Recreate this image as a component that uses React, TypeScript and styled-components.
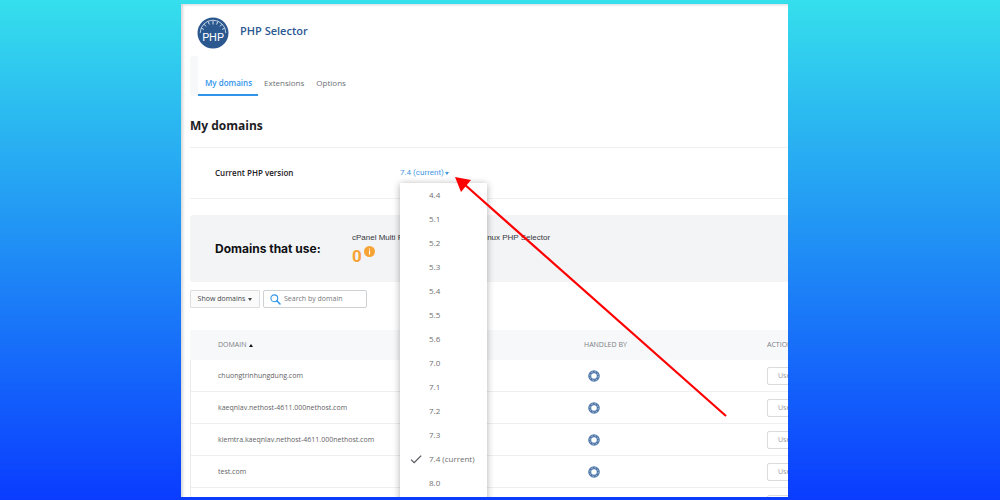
import React from "react";
import styled, { createGlobalStyle, css } from "styled-components";

const GlobalStyle = createGlobalStyle`
  * { box-sizing: border-box; }
  body { margin: 0; font-family: "Open Sans", "Noto Sans", sans-serif; color: #5f6266; }
  button, input { font-family: inherit; }
`;

const Page = styled.div`
  display: grid;
  grid-template-columns: 181fr 607fr 212fr;
  height: 100vh;
  padding: 4px 0 3px;
  background: linear-gradient(180deg, #35dfec 0%, #0a3cff 100%);
`;

const Panel = styled.main`
  grid-column: 2;
  position: relative;
  min-width: 0;
  overflow: hidden;
  padding-left: 9px;
  background: #fff;
  box-shadow: inset 3px 2px 3px -1px #d4d8dc;
`;

const Header = styled.header`
  display: flex;
  align-items: center;
  gap: 11px;
  padding: 13px 0 7px 7px;
`;

const Brand = styled.span`
  font-size: 11px;
  line-height: 16px;
  font-weight: 600;
  color: #2c5890;
  margin-bottom: 4px;
`;

const Tabs = styled.nav`
  display: flex;
  align-items: flex-end;
  height: 40px;
  border-left: 8px solid #f7f8fa;
  border-radius: 3px 0 0 3px;
`;

const Tab = styled.a<{ $active?: boolean }>`
  padding: 0 6px 5px;
  font-size: 8px;
  line-height: 12px;
  text-decoration: none;
  color: #6c6f73;
  border-bottom: 2px solid transparent;
  ${(p) => p.$active && css`
    color: #2f95ea;
    font-weight: 600;
    padding-left: 7px;
    border-color: #2f95ea;
  `}
`;

const Title = styled.h1`
  margin: 21px 0 12px;
  font-size: 12px;
  line-height: 18px;
  font-weight: 700;
  color: #1d2024;
`;

const VersionRow = styled.section`
  display: grid;
  grid-template-columns: 185px 1fr;
  align-items: center;
  height: 52px;
  padding-left: 25px;
  border: solid #eff0f1;
  border-width: 1px 0;
`;

const VersionLabel = styled.span`
  font-size: 8px;
  line-height: 12px;
  font-weight: 600;
  color: #1d2024;
`;

const Picker = styled.div`
  position: relative;
`;

const VersionButton = styled.button`
  display: flex;
  align-items: center;
  gap: 1px;
  padding: 0;
  border: 0;
  background: none;
  font-family: Roboto, sans-serif;
  font-size: 8px;
  line-height: 12px;
  color: #3f97e4;
`;

const Caret = styled.span<{ $up?: boolean }>`
  border: 2px solid transparent;
  ${(p) => p.$up
    ? css`border-top: 0; border-bottom: 3px solid currentColor;`
    : css`border-bottom: 0; border-top: 3px solid currentColor;`}
`;

const Menu = styled.ul`
  position: absolute;
  z-index: 2;
  top: 16px;
  left: 0;
  width: 87px;
  margin: 0;
  padding: 0 0 8px;
  list-style: none;
  background: #fff;
  box-shadow: 0 1px 7px rgba(0, 0, 0, 0.32);
`;

const MenuItem = styled.button`
  display: grid;
  grid-template-columns: 12px 1fr;
  gap: 7px;
  align-items: center;
  width: 100%;
  height: 24px;
  padding: 0 0 1px 10px;
  border: 0;
  background: none;
  font-size: 8px;
  line-height: 12px;
  text-align: left;
  color: #6f6f6f;
`;

const MenuLabel = styled.span`
  grid-column: 2;
`;

const Summary = styled.section`
  display: grid;
  grid-template-columns: 137px 108px 1fr;
  align-items: center;
  height: 67px;
  margin: 16px 0 8px;
  padding-left: 25px;
  background: #f3f4f6;
  border-radius: 3px 0 0 3px;
`;

const SummaryTitle = styled.h2`
  margin: 0;
  font-family: Inter, sans-serif;
  font-size: 12px;
  line-height: 18px;
  font-weight: 700;
  color: #0e1013;
`;

const Stat = styled.div`
  align-self: start;
  padding-top: 17px;
  font-family: "Liberation Sans", Arial, sans-serif;
  font-size: 8px;
  line-height: 12px;
  color: #33363a;
  white-space: nowrap;
`;

const Count = styled.div`
  display: flex;
  gap: 2px;
  padding-top: 2px;
  font-family: Roboto, sans-serif;
  font-size: 17px;
  line-height: 20px;
  font-weight: 700;
  color: #f5a335;
`;

const Toolbar = styled.div`
  display: flex;
  gap: 3px;
  margin-bottom: 22px;
`;

const FilterButton = styled.button`
  display: flex;
  align-items: center;
  justify-content: center;
  gap: 3px;
  width: 70px;
  height: 18px;
  padding: 0;
  border: 1px solid #dcdee0;
  border-radius: 1px;
  background: #fafafa;
  font-size: 7px;
  line-height: 12px;
  color: #44474b;
`;

const SearchBox = styled.label`
  display: flex;
  align-items: center;
  gap: 3px;
  width: 104px;
  height: 18px;
  padding: 0 6px;
  border: 1px solid #cfd2d5;
  border-radius: 2px;
`;

const SearchInput = styled.input`
  min-width: 0;
  flex: 1;
  padding: 0;
  border: 0;
  outline: 0;
  background: none;
  font-size: 7px;
  line-height: 12px;
  &::placeholder { color: #75787c; opacity: 1; }
`;

const Table = styled.table`
  width: 115%;
  table-layout: fixed;
  border-collapse: separate;
  border-spacing: 0;
  font-size: 7px;
  line-height: 12px;
`;

const Th = styled.th<{ $width?: number }>`
  width: ${(p) => (p.$width ? `${p.$width}px` : "auto")};
  height: 30px;
  padding: 0;
  background: #f7f8fa;
  font-weight: 400;
  text-align: left;
  color: #7b7e82;
  &:first-child { padding-left: 28px; }
`;

const SortLabel = styled.span`
  display: flex;
  align-items: center;
  gap: 3px;
`;

const SortMark = styled(Caret)`
  color: #111;
`;

const Td = styled.td`
  height: 32px;
  padding: 0;
  border-bottom: 1px solid #eeeff0;
  vertical-align: middle;
  &:first-child { padding-left: 27px; border-left: 1px solid #e8eaec; }
  & > svg { display: block; margin-left: 4px; }
`;

const UseButton = styled.button`
  display: block;
  width: 90px;
  height: 18px;
  padding: 0 0 0 10px;
  border: 1px solid #d9dbdd;
  border-radius: 2px;
  background: #fff;
  font-size: 7px;
  line-height: 12px;
  text-align: left;
  color: #97999c;
`;

const Arrow = styled.svg`
  position: absolute;
  z-index: 3;
  top: 166px;
  left: 269px;
  pointer-events: none;
`;

const Logo = () => (
  <svg width="32" height="32" viewBox="0 0 32 32" aria-hidden="true">
    <circle cx="16" cy="16" r="15.5" fill="#2c5890" />
    <path d="M3.2 16A12.8 12.8 0 0 1 28.8 16" fill="none" stroke="#b9cbe0" strokeWidth="1" />
    <path
      d="M16 3.5v4M11.2 4.5l1.2 3M20.8 4.5l-1.2 3M7 7.2l2 2.2M25 7.2l-2 2.2M4.3 11.2l2.5 1.2M27.7 11.2l-2.5 1.2"
      stroke="#d5e0ed"
      strokeWidth="1"
    />
    <text x="16" y="24" textAnchor="middle" fontFamily="Roboto, sans-serif" fontSize="11" fill="#fff">
      PHP
    </text>
  </svg>
);

const Check = () => (
  <svg width="12" height="10" viewBox="0 0 12 10" aria-hidden="true">
    <path d="M1 5.6l3.2 3L11.2 1.6" fill="none" stroke="#55585c" strokeWidth="1.3" />
  </svg>
);

const SearchIcon = () => (
  <svg width="11" height="11" viewBox="0 0 11 11" aria-hidden="true">
    <circle cx="4.3" cy="4.3" r="3.4" fill="none" stroke="#2f95ea" strokeWidth="1.1" />
    <path d="M6.8 6.8L10 10" stroke="#2f95ea" strokeWidth="1.5" strokeLinecap="round" />
  </svg>
);

const InfoIcon = () => (
  <svg width="11" height="11" viewBox="0 0 11 11" aria-hidden="true">
    <circle cx="5.5" cy="5.5" r="5.5" fill="#f5a335" />
    <path d="M5.5 2.4v1.2M5.5 4.6v3.8" stroke="#fff" strokeWidth="1.1" />
  </svg>
);

const Handler = () => (
  <svg width="12" height="12" viewBox="0 0 12 12" aria-hidden="true">
    <circle cx="6" cy="6" r="4.3" fill="none" stroke="#5379ab" strokeWidth="3" />
    <circle cx="6" cy="6" r="4.3" fill="none" stroke="#a9bfdb" strokeWidth="0.9" strokeDasharray="1.6 1.78" />
  </svg>
);

const versions = ["4.4", "5.1", "5.2", "5.3", "5.4", "5.5", "5.6", "7.0", "7.1", "7.2", "7.3", "7.4 (current)", "8.0"];
const domains = [
  "chuongtrinhungdung.com",
  "kaeqnlav.nethost-4611.000nethost.com",
  "kiemtra.kaeqnlav.nethost-4611.000nethost.com",
  "test.com",
  "",
];

export default function App() {
  return (
    <>
      <GlobalStyle />
      <Page>
        <Panel>
          <Header>
            <Logo />
            <Brand>PHP Selector</Brand>
          </Header>
          <Tabs>
            <Tab href="#domains" $active>My domains</Tab>
            <Tab href="#extensions">Extensions</Tab>
            <Tab href="#options">Options</Tab>
          </Tabs>
          <Title>My domains</Title>
          <VersionRow>
            <VersionLabel id="version-label">Current PHP version</VersionLabel>
            <Picker>
              <VersionButton type="button" aria-haspopup="true" aria-expanded="true" aria-describedby="version-label">
                7.4 (current)
                <Caret />
              </VersionButton>
              <Menu>
                {versions.map((v) => (
                  <li key={v}>
                    <MenuItem type="button">
                      {v.includes("current") && <Check />}
                      <MenuLabel>{v}</MenuLabel>
                    </MenuItem>
                  </li>
                ))}
              </Menu>
            </Picker>
          </VersionRow>
          <Summary>
            <SummaryTitle>Domains that use:</SummaryTitle>
            <Stat>
              cPanel Multi PHP
              <Count>0<InfoIcon /></Count>
            </Stat>
            <Stat>CloudLinux PHP Selector</Stat>
          </Summary>
          <Toolbar>
            <FilterButton type="button">Show domains <Caret /></FilterButton>
            <SearchBox>
              <SearchIcon />
              <SearchInput type="text" placeholder="Search by domain" aria-label="Search by domain" />
            </SearchBox>
          </Toolbar>
          <Table>
            <thead>
              <tr>
                <Th $width={394}><SortLabel>DOMAIN <SortMark $up /></SortLabel></Th>
                <Th $width={183}>HANDLED BY</Th>
                <Th>ACTIONS</Th>
              </tr>
            </thead>
            <tbody>
              {domains.map((d) => (
                <tr key={d}>
                  <Td>{d}</Td>
                  <Td><Handler /></Td>
                  <Td><UseButton type="button">Use</UseButton></Td>
                </tr>
              ))}
            </tbody>
          </Table>
          <Arrow width="280" height="250" viewBox="450 170 280 250" aria-hidden="true">
            <path d="M726 416L464 184" stroke="#fe0000" strokeWidth="2.2" />
            <path d="M455 177L471 180L461 192Z" fill="#fe0000" />
          </Arrow>
        </Panel>
      </Page>
    </>
  );
}
